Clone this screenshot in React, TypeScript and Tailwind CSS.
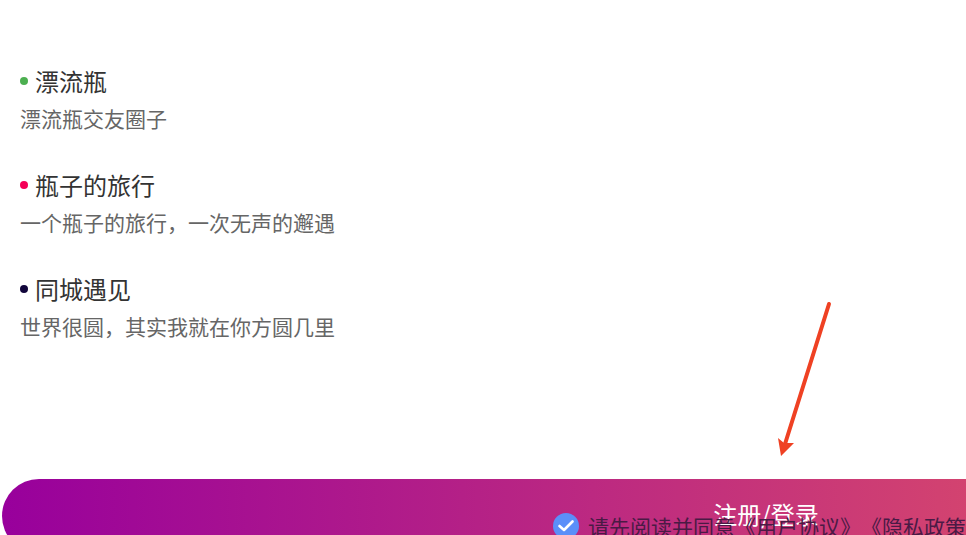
const features = [
  { title: "漂流瓶", desc: "漂流瓶交友圈子", dot: "bg-[#4caf50]" },
  { title: "瓶子的旅行", desc: "一个瓶子的旅行，一次无声的邂遇", dot: "bg-[#f50057]" },
  { title: "同城遇见", desc: "世界很圆，其实我就在你方圆几里", dot: "bg-[#12063b]" },
];

function Arrow() {
  return (
    <svg className="absolute left-[770px] top-[298px]" width="66" height="164" viewBox="770 298 66 164" aria-hidden="true">
      <path d="M829 304 L785 444" fill="none" stroke="#ef4123" strokeWidth="4" strokeLinecap="round" />
      <path d="M781 456 L778 438 L784 443 L794 443 Z" fill="#ef4123" />
    </svg>
  );
}

export default function App() {
  return (
    <div className="relative h-[535px] w-[966px] overflow-hidden bg-white font-['Noto_Sans_CJK_SC',sans-serif]">
      <div className="flex flex-col gap-[37px] pl-5 pt-[65px]">
        {features.map((item) => (
          <div key={item.title}>
            <div className="flex h-[32px] items-center gap-[7px]">
              <span className={`h-2 w-2 rounded-full ${item.dot}`} />
              <h3 className="text-[24px] leading-[32px] font-normal text-[#333]">{item.title}</h3>
            </div>
            <p className="mt-[7px] text-[21px] leading-[28px] text-[#666]">{item.desc}</p>
          </div>
        ))}
      </div>

      <Arrow />

      <div className="absolute left-[2px] top-[479px] flex h-[74px] w-[1528px] justify-center rounded-[37px] bg-linear-to-r/srgb from-[#98009c] to-[#f56a56] pt-[17px]">
        <span className="text-[24px] leading-[36px] text-white">注册/登录</span>
      </div>

      <div className="absolute left-[553px] top-[512px] flex items-center gap-[9px] whitespace-nowrap">
        <span className="flex h-[26px] w-[26px] shrink-0 items-center justify-center rounded-full bg-[#5b8ff9]">
          <svg width="16" height="12" viewBox="0 0 16 12" aria-hidden="true">
            <path d="M1.5 6 L6 10 L14.5 1.5" fill="none" stroke="#fff" strokeWidth="2.6" strokeLinecap="round" strokeLinejoin="round" />
          </svg>
        </span>
        <span className="text-[21px] leading-[28px] text-[#4a1a45] [text-spacing-trim:space-all]">请先阅读并同意《用户协议》《隐私政策》</span>
      </div>
    </div>
  );
}
